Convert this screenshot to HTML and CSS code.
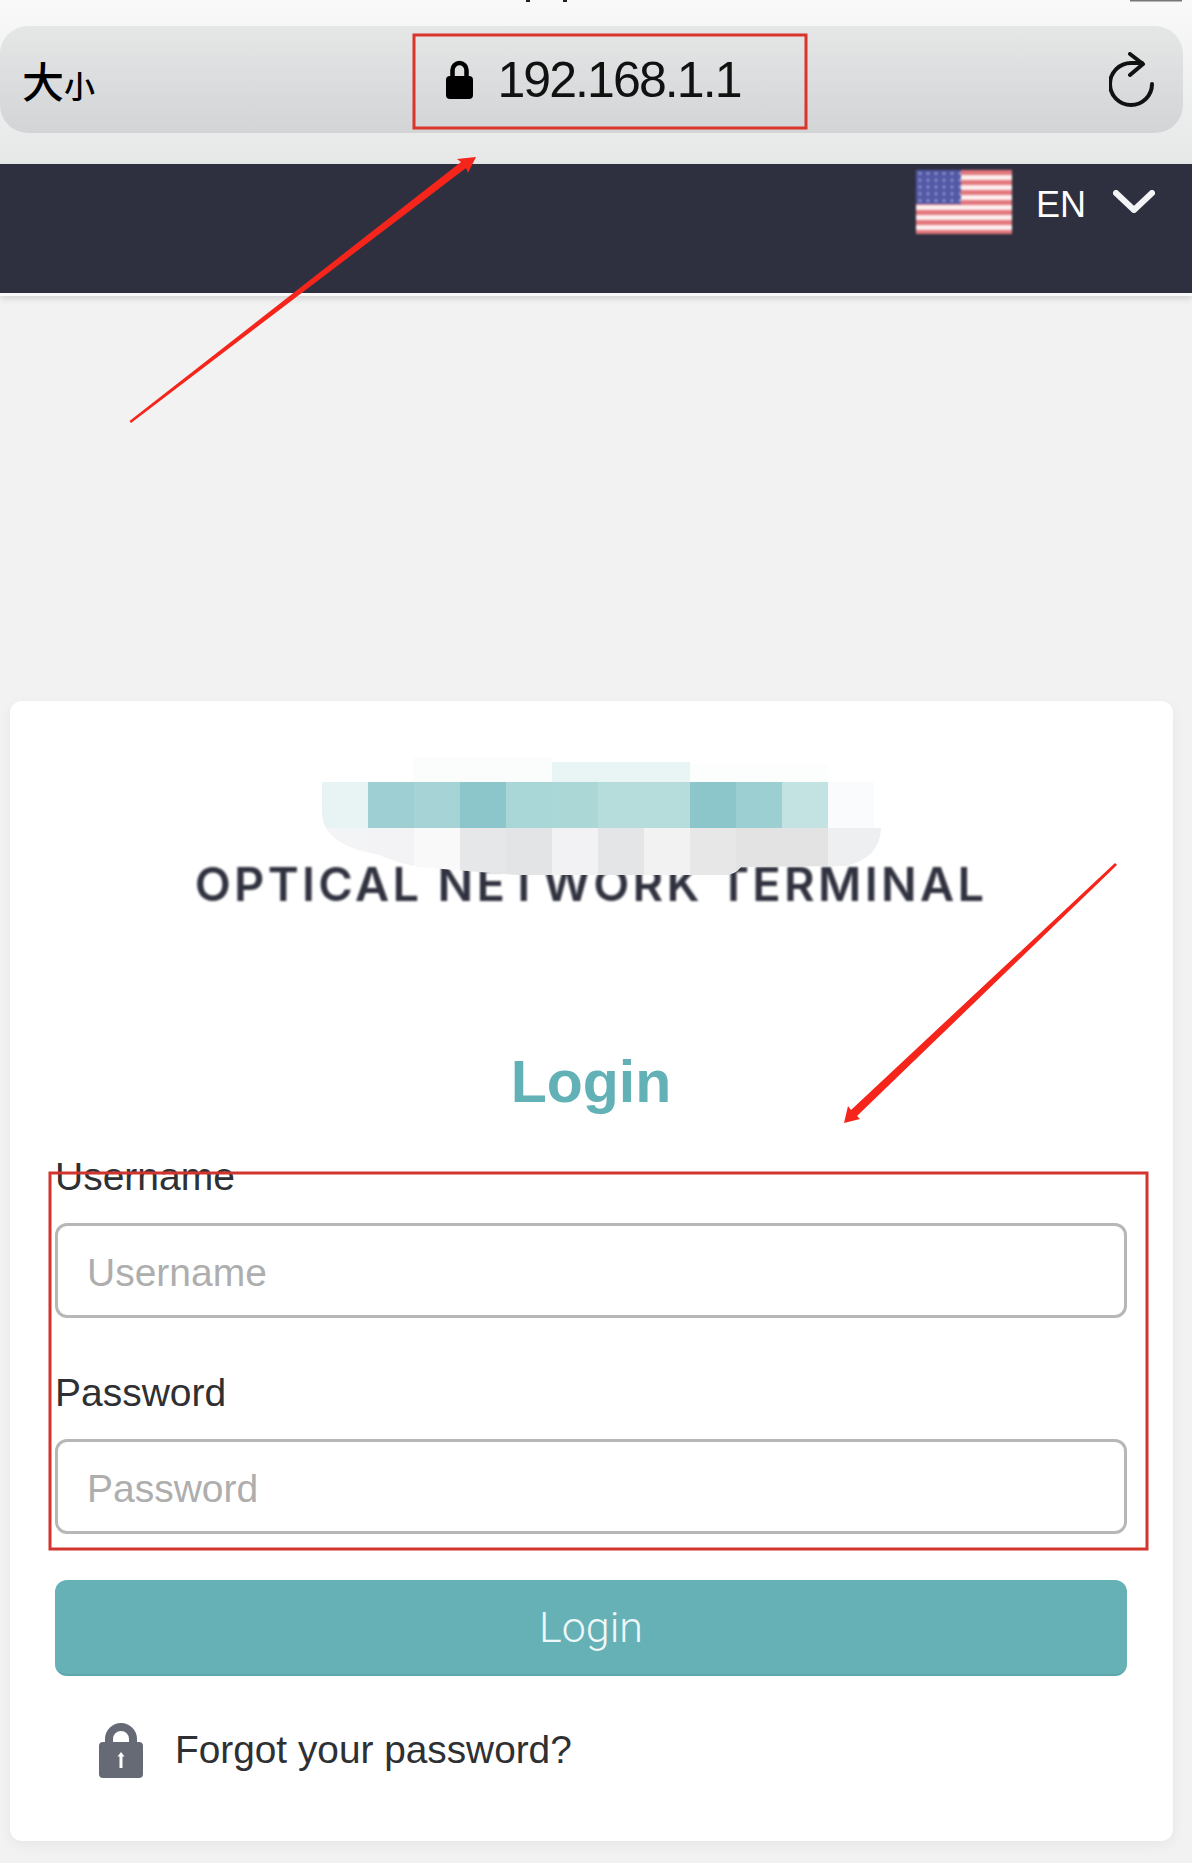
FILE: index.html
```html
<!DOCTYPE html>
<html lang="en">
<head>
    <meta charset="UTF-8">
    <meta name="viewport" content="width=device-width, initial-scale=1.0">
    <title>Login</title>
    <link rel="stylesheet" href="styles.css">
</head>
<body>

    <!-- Barra del browser -->
    <div class="browser">
        <div class="address-bar">
            <div class="text-size"><span class="big">大</span><span class="small">小</span></div>
            <div class="url">
                <svg class="url-lock" width="27" height="39" viewBox="0 0 27 39">
                    <path d="M6.5 18V10a7 7 0 0 1 14 0v8" fill="none" stroke="#000" stroke-width="4.5"/>
                    <rect x="0" y="16" width="27" height="23" rx="4" fill="#000"/>
                </svg>
                <span>192.168.1.1</span>
            </div>
            <svg class="reload" width="46" height="56" viewBox="0 0 46 56">
                <path d="M43 32a21 21 0 1 1-21-21h11" fill="none" stroke="#111" stroke-width="4" stroke-linecap="round"/>
                <path d="M21 2l13 10-13 11" fill="none" stroke="#111" stroke-width="4" stroke-linecap="round" stroke-linejoin="round"/>
            </svg>
        </div>
    </div>

    <div class="topbar">
        <svg class="flag" width="96" height="64" viewBox="0 0 96 64">
            <defs>
                <pattern id="stars" width="8" height="6.8" patternUnits="userSpaceOnUse">
                    <circle cx="4" cy="3.4" r="1.3" fill="#aab0dc"/>
                </pattern>
            </defs>
            <rect width="96" height="64" fill="#e2787e"/>
            <rect y="5" width="96" height="5" fill="#fdeeee"/>
            <rect y="15" width="96" height="5" fill="#fdeeee"/>
            <rect y="25" width="96" height="5" fill="#fdeeee"/>
            <rect y="35" width="96" height="5" fill="#fdeeee"/>
            <rect y="45" width="96" height="5" fill="#fdeeee"/>
            <rect y="55" width="96" height="5" fill="#fdeeee"/>
            <rect width="45" height="34" fill="#5459a6"/>
            <rect width="45" height="34" fill="url(#stars)"/>
        </svg>
        <span class="lang">EN</span>
        <svg class="chevron" width="42" height="26" viewBox="0 0 42 26">
            <path d="M3 4l18 17L39 4" fill="none" stroke="#f4f4f6" stroke-width="6" stroke-linecap="round" stroke-linejoin="round"/>
        </svg>
    </div>

    <div class="card">
        <div class="logo">
            <div class="logo-text">OPTICAL NETWORK TERMINAL</div>
            <!-- Logo pixelato -->
            <svg class="mosaic" width="560" height="123" viewBox="322 753 560 123">
                <defs>
                    <clipPath id="mosaic-shape">
                        <path d="M322 753H881V828Q880 858 846 866L741 867Q735 875 725 875H516L418 867Q395 862 379 855Q324 845 322 815Z"/>
                    </clipPath>
                </defs>
                <g clip-path="url(#mosaic-shape)">
                    <rect x="414" y="757" width="138" height="25" fill="#fbfcfc"/>
                    <rect x="552" y="762" width="138" height="20" fill="#e9f4f5"/>
                    <rect x="690" y="765" width="138" height="17" fill="#fcfdfd"/>
                    <rect x="322" y="782" width="46" height="46" fill="#e8f3f3"/>
                    <rect x="368" y="782" width="46" height="46" fill="#9ed0d3"/>
                    <rect x="414" y="782" width="46" height="46" fill="#a6d3d5"/>
                    <rect x="460" y="782" width="46" height="46" fill="#8cc6ca"/>
                    <rect x="506" y="782" width="46" height="46" fill="#a9d6d6"/>
                    <rect x="552" y="782" width="46" height="46" fill="#abd7d7"/>
                    <rect x="598" y="782" width="46" height="46" fill="#b7dcdc"/>
                    <rect x="644" y="782" width="46" height="46" fill="#b7dcdc"/>
                    <rect x="690" y="782" width="46" height="46" fill="#8cc5ca"/>
                    <rect x="736" y="782" width="46" height="46" fill="#9bcfd2"/>
                    <rect x="782" y="782" width="46" height="46" fill="#c3e2e2"/>
                    <rect x="828" y="782" width="46" height="46" fill="#f9fbfc"/>
                    <rect x="322" y="828" width="46" height="47" fill="#f3f4f5"/>
                    <rect x="368" y="828" width="46" height="47" fill="#f3f3f5"/>
                    <rect x="414" y="828" width="46" height="47" fill="#f9f9fa"/>
                    <rect x="460" y="828" width="46" height="47" fill="#e6e7e8"/>
                    <rect x="506" y="828" width="46" height="47" fill="#e3e4e5"/>
                    <rect x="552" y="828" width="46" height="47" fill="#f2f2f4"/>
                    <rect x="598" y="828" width="46" height="47" fill="#e4e5e6"/>
                    <rect x="644" y="828" width="46" height="47" fill="#f2f2f3"/>
                    <rect x="690" y="828" width="46" height="47" fill="#e7e7e8"/>
                    <rect x="736" y="828" width="46" height="47" fill="#e3e3e4"/>
                    <rect x="782" y="828" width="46" height="47" fill="#e3e3e4"/>
                    <rect x="828" y="828" width="53" height="47" fill="#eeeff0"/>
                </g>
            </svg>
        </div>

        <h1>Login</h1>

        <form class="login-form">
            <label for="username">Username</label>
            <input id="username" type="text" placeholder="Username">
            <label for="password">Password</label>
            <input id="password" type="password" placeholder="Password">
            <button type="button" class="btn">Login</button>
        </form>

        <a href="#" class="forgot">
            <svg class="forgot-lock" width="44" height="56" viewBox="0 0 44 56">
                <path d="M10 24V17a12 12 0 0 1 24 0v7" fill="none" stroke="#666a75" stroke-width="8"/>
                <rect x="0" y="20" width="44" height="36" rx="4" fill="#666a75"/>
                <path d="M22 30l3.500 4.500h-2V46h-3V34.500h-2z" fill="#fff"/>
            </svg>
            <span>Forgot your password?</span>
        </a>
    </div>

    <!-- Riquadri e frecce disegnati sopra lo screenshot -->
    <svg class="marks" width="1192" height="1863" viewBox="0 0 1192 1863">
        <rect x="414" y="35" width="392" height="93" fill="none" stroke="#d9352c" stroke-width="3"/>
        <rect x="50" y="1173" width="1097" height="376" fill="none" stroke="#d2352e" stroke-width="3"/>
        <polygon points="129.500,421 461,162 457,159 476,157 468,173 466,168 131,423" fill="#f5251b"/>
        <polygon points="1115,863 851,1110 848,1106 844,1123 860,1119 857,1116 1117,865" fill="#f5251b"/>
        <rect x="526" y="0" width="4" height="2" fill="#222"/>
        <rect x="563" y="0" width="4" height="2" fill="#222"/>
        <rect x="1130" y="0" width="52" height="1.500" fill="#777"/>
    </svg>

</body>
</html>
```

FILE: styles.css
```css
* {
    margin: 0;
    padding: 0;
    box-sizing: border-box;
}

body {
    position: relative;
    height: 1863px;
    overflow: hidden;
    background-color: #f2f2f2;
    color: #2f3033;
    font-family: "Liberation Sans", Arial, sans-serif;
}

/* Barra del browser */
.browser {
    height: 164px;
    padding-top: 26px;
    background: linear-gradient(#f9f9f9, #e6e8e8);
}

.address-bar {
    display: grid;
    grid-template-columns: 1fr auto 1fr;
    align-items: center;
    height: 107px;
    margin-right: 9px;
    padding: 0 28px 0 22px;
    border-radius: 28px;
    background: linear-gradient(#e5e6e6, #d3d4d6);
}

.text-size {
    color: #000;
    font-family: "Noto Sans CJK SC", sans-serif;
    font-weight: 500;
}

.text-size .big {
    font-size: 42px;
}

.text-size .small {
    font-size: 31px;
}

.url {
    display: flex;
    align-items: center;
    gap: 24px;
    margin-left: 10px;
    color: #111;
    font-size: 50px;
    letter-spacing: -1.9px;
}

.reload {
    justify-self: end;
}

/* Barra scura */
.topbar {
    display: flex;
    align-items: flex-start;
    height: 132px;
    padding: 6px 37px 0 0;
    justify-content: flex-end;
    background-color: #2e3040;
    border-bottom: 3px solid #f9f9f9;
    box-shadow: 0 3px 6px rgba(0, 0, 0, 0.12);
}

.flag {
    filter: blur(1px);
}

.lang {
    margin-left: 24px;
    margin-top: 14px;
    color: #fff;
    font-size: 36px;
}

.chevron {
    margin-left: 27px;
    margin-top: 19px;
    filter: blur(0.5px);
}

/* Card di login */
.card {
    width: 1163px;
    height: 1140px;
    margin: 405px 0 0 10px;
    padding: 0 46px 0 45px;
    background-color: #fff;
    border-radius: 12px;
    box-shadow: 0 4px 14px rgba(0, 0, 0, 0.05);
}

.logo {
    position: relative;
    height: 210px;
    padding-top: 158px;
}

.logo-text {
    color: #30323f;
    font-family: Inter, sans-serif;
    font-size: 47px;
    font-weight: 600;
    letter-spacing: 3.3px;
    line-height: 50px;
    text-align: center;
    white-space: nowrap;
    filter: blur(0.8px);
}

.mosaic {
    position: absolute;
    left: 267px;
    top: 52px;
}

h1 {
    margin-top: 135px;
    margin-bottom: 37px;
    color: #62b1b6;
    font-size: 59px;
    font-weight: bold;
    line-height: 72px;
    text-align: center;
}

.login-form label {
    display: block;
    font-size: 39px;
    line-height: 44px;
}

.login-form input {
    display: block;
    width: 100%;
    height: 95px;
    margin-top: 24px;
    margin-bottom: 46px;
    padding: 4px 0 0 29px;
    color: #333;
    font-family: "Liberation Sans", Arial, sans-serif;
    font-size: 39px;
    background: #fff;
    border: 3px solid #b7b7b7;
    border-radius: 12px;
    outline: none;
}

.login-form input + label {
    margin-top: 53px;
}

.login-form input::placeholder {
    color: #aeaeae;
    opacity: 1;
}

.btn {
    display: block;
    width: 100%;
    height: 96px;
    color: #eef8f8;
    font-family: Roboto, sans-serif;
    font-size: 43px;
    font-weight: 300;
    background: #65b1b6;
    border: none;
    border-bottom: 2px solid #5da5aa;
    border-radius: 12px;
    cursor: pointer;
}

.forgot {
    display: flex;
    align-items: center;
    gap: 32px;
    margin-top: 46px;
    padding-left: 44px;
    color: #2f3033;
    font-size: 38.8px;
    text-decoration: none;
}

.forgot-lock {
    filter: blur(0.7px);
}

/* Annotazioni sopra la pagina */
.marks {
    position: absolute;
    top: 0;
    left: 0;
    pointer-events: none;
}
```
